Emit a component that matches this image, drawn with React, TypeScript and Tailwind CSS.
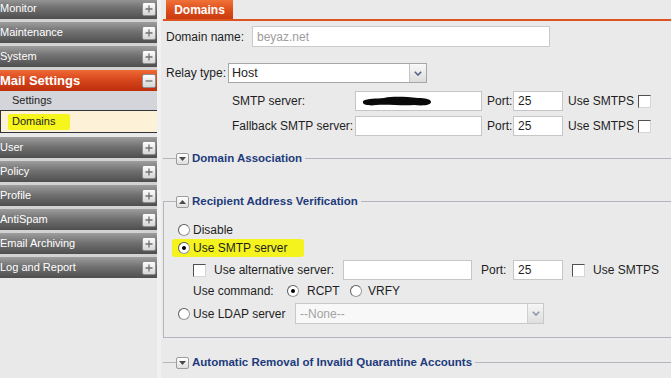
import React from 'react';

const navItems = ['Monitor', 'Maintenance', 'System'];
const lowerItems = ['User', 'Policy', 'Profile', 'AntiSpam', 'Email Archiving', 'Log and Report'];

function PlusBox({ minus }: { minus?: boolean }) {
  return (
    <span className="w-[14px] h-[14px] mr-px shrink-0 rounded-[2px] border border-[#8e8e8e] bg-[linear-gradient(to_bottom,#fdfdfd,#d6d6d6)] flex items-center justify-center text-[#707070]">
      <svg width="8" height="8" viewBox="0 0 8 8">
        <path d={minus ? 'M0.5 4h7' : 'M0.5 4h7M4 0.5v7'} stroke="currentColor" strokeWidth="1.3" />
      </svg>
    </span>
  );
}

function NavBar({ label }: { label: string }) {
  return (
    <div className="h-[21px] flex items-center justify-between bg-[linear-gradient(to_bottom,#9e9e9e,#727272_45%,#4e4e4e)]">
      <span className="text-white text-[11px] leading-none">{label}</span>
      <PlusBox />
    </div>
  );
}

function Radio({ checked }: { checked?: boolean }) {
  return (
    <span className="w-[12px] h-[12px] shrink-0 rounded-full border border-[#9a9a9a] border-t-[#5c5c5c] border-l-[#5c5c5c] bg-white flex items-center justify-center">
      {checked && <span className="w-[4px] h-[4px] rounded-full bg-black" />}
    </span>
  );
}

function Check() {
  return (
    <span className="block w-[13px] h-[13px] shrink-0 bg-white border border-t-[#505050] border-l-[#505050] border-r-[#d6d6d6] border-b-[#d6d6d6]" />
  );
}

function Toggle({ up }: { up?: boolean }) {
  return (
    <span className="w-[13px] h-[12px] shrink-0 rounded-[2px] border border-[#9c9c9c] bg-[linear-gradient(to_bottom,#ffffff,#dedede)] flex items-center justify-center">
      <svg width="7" height="4" viewBox="0 0 7 4">
        <path d={up ? 'M0 4L3.5 0L7 4Z' : 'M0 0L3.5 4L7 0Z'} fill="#4a4a4a" />
      </svg>
    </span>
  );
}

function Legend({ title, up, indent }: { title: string; up?: boolean; indent: string }) {
  return (
    <legend className={`${indent} pr-[3px]`}>
      <span className="flex items-center gap-[3px] h-[13px]">
        <Toggle up={up} />
        <span className="text-[11.5px] leading-none font-bold text-[#1d3b7c]">{title}</span>
      </span>
    </legend>
  );
}

function Chevron({ color }: { color: string }) {
  return (
    <svg width="8" height="5" viewBox="0 0 8 5">
      <path d="M0.8 0.8L4 4L7.2 0.8" fill="none" stroke={color} strokeWidth="1.6" />
    </svg>
  );
}

function TextBox({ width, value, children }: { width: string; value?: string; children?: React.ReactNode }) {
  return (
    <div className={`${width} h-[20px] shrink-0 bg-white border border-[#c6c6c6] flex items-center px-[4px] text-[12px] text-[#1e1e1e]`}>
      {value}
      {children}
    </div>
  );
}

export default function App() {
  return (
    <div className="w-[671px] h-[378px] overflow-hidden flex bg-[#eaeaea] font-['Liberation_Sans',Arial,sans-serif]">
      <aside className="w-[161px] shrink-0 border-r-4 border-[#f1f1f1] bg-[#e9e9e9] flex flex-col">
        <div className="-mt-[2px] flex flex-col gap-[3px] bg-[#d2d2d2]">
          {navItems.map((item) => (
            <NavBar key={item} label={item} />
          ))}
          <div className="h-[21px] flex items-center justify-between bg-[linear-gradient(to_bottom,#ef6a36,#d6441b_50%,#bd2e0b)]">
            <span className="text-white text-[13px] font-bold leading-none">Mail Settings</span>
            <PlusBox minus />
          </div>
        </div>
        <div className="h-[19px] bg-[#d3d5da] flex items-center pl-[12px] text-[11px] text-[#1e1e1e]">Settings</div>
        <div className="h-[23px] bg-[#fdf1d8] border-y border-l border-[#2f333b] flex items-center pl-[7px]">
          <span className="h-[16px] w-[62px] bg-[#f6f51c] rounded-[2px] flex items-center pl-[4px] text-[11px] text-[#1e1e1e]">Domains</span>
        </div>
        <div className="mt-[4px] flex flex-col gap-[3px] bg-[#d2d2d2]">
          {lowerItems.map((item) => (
            <NavBar key={item} label={item} />
          ))}
        </div>
      </aside>

      <main className="flex-1 min-w-0 flex flex-col text-[12px] text-[#1e1e1e]">
        <div className="h-[21px] shrink-0 ml-[2px] border-b-2 border-[#dd5420] flex items-end">
          <div className="ml-[3px] w-[67px] h-[19px] bg-[linear-gradient(to_bottom,#f07238,#dc4c1a_55%,#c93c10)] flex items-center justify-center text-white font-bold text-[12px]">
            Domains
          </div>
        </div>

        <div className="mt-[5px] h-[21px] pl-[5px] flex items-center">
          <span className="w-[86px] shrink-0">Domain name:</span>
          <div className="w-[298px] h-[21px] bg-white border border-[#cacaca] flex items-center px-[4px] text-[#9d9d9d]">beyaz.net</div>
        </div>

        <div className="mt-[16px] h-[20px] pl-[5px] flex items-center">
          <span className="w-[62px] shrink-0">Relay type:</span>
          <div className="w-[199px] h-[20px] bg-white border border-[#a7a7a7] flex items-stretch">
            <span className="flex-1 flex items-center pl-[3px] text-[12.5px]">Host</span>
            <span className="w-[17px] border-l border-[#c4c4c4] bg-[linear-gradient(to_bottom,#fafafa,#dcdcdc)] flex items-center justify-center">
              <Chevron color="#52648a" />
            </span>
          </div>
        </div>

        <div className="mt-[8px] h-[20px] pl-[71px] flex items-center">
          <span className="w-[123px] shrink-0">SMTP server:</span>
          <TextBox width="w-[127px]">
            <svg width="70" height="13" viewBox="0 0 70 13" className="ml-[2px]">
              <path
                d="M1 6 C6 3, 14 4, 22 3 C32 1, 44 2, 56 3 C63 3, 69 4, 69 7 C69 10, 62 11, 52 10 C40 11, 26 9, 14 10 C8 11, 2 10, 1 8 Z"
                fill="#0a0a0a"
              />
            </svg>
          </TextBox>
          <span className="ml-[5px] w-[26px] shrink-0">Port:</span>
          <TextBox width="w-[50px]" value="25" />
          <span className="ml-[5px]">Use SMTPS</span>
          <span className="ml-[4px]">
            <Check />
          </span>
        </div>

        <div className="mt-[5px] h-[20px] pl-[71px] flex items-center">
          <span className="w-[123px] shrink-0">Fallback SMTP server:</span>
          <TextBox width="w-[127px]" />
          <span className="ml-[5px] w-[26px] shrink-0">Port:</span>
          <TextBox width="w-[50px]" value="25" />
          <span className="ml-[5px]">Use SMTPS</span>
          <span className="ml-[4px]">
            <Check />
          </span>
        </div>

        <fieldset className="mt-[16px] ml-[2px] border-t border-[#b5b5bd]">
          <Legend title="Domain Association" indent="ml-[13px]" />
        </fieldset>

        <fieldset className="mt-[30px] ml-[2px] border-t border-l border-b border-[#b5b5bd] pb-[13px]">
          <Legend title="Recipient Address Verification" up indent="ml-[12px]" />

          <div className="mt-[13px] h-[18px] pl-[14px] flex items-center">
            <Radio />
            <span className="ml-[3px]">Disable</span>
          </div>

          <div className="h-[18px] pl-[8px] flex items-center">
            <span className="h-[18px] pl-[6px] pr-[17px] bg-[#f4f31e] rounded-[3px] flex items-center">
              <Radio checked />
              <span className="ml-[3px]">Use SMTP server</span>
            </span>
          </div>

          <div className="mt-[3px] h-[20px] pl-[29px] flex items-center">
            <Check />
            <span className="ml-[8px] w-[129px] shrink-0">Use alternative server:</span>
            <TextBox width="w-[129px]" />
            <span className="ml-[9px] w-[32px] shrink-0">Port:</span>
            <TextBox width="w-[50px]" value="25" />
            <span className="ml-[9px]">
              <Check />
            </span>
            <span className="ml-[8px]">Use SMTPS</span>
          </div>

          <div className="mt-[2px] h-[18px] pl-[29px] flex items-center">
            <span className="w-[94px] shrink-0">Use command:</span>
            <Radio checked />
            <span className="ml-[8px] w-[43px] shrink-0">RCPT</span>
            <Radio />
            <span className="ml-[6px]">VRFY</span>
          </div>

          <div className="mt-[3px] h-[21px] pl-[14px] flex items-center">
            <Radio />
            <span className="ml-[3px] w-[102px] shrink-0">Use LDAP server</span>
            <div className="w-[249px] h-[21px] bg-[#f8f8f8] border border-[#c8c8c8] flex items-stretch">
              <span className="flex-1 flex items-center pl-[4px] text-[#a3a3a3]">--None--</span>
              <span className="w-[16px] border-l border-[#d0d0d0] bg-[linear-gradient(to_bottom,#f6f6f6,#dedede)] flex items-center justify-center">
                <Chevron color="#8c94a8" />
              </span>
            </div>
          </div>
        </fieldset>

        <fieldset className="mt-[18px] ml-[2px] border-t border-[#b5b5bd]">
          <Legend title="Automatic Removal of Invalid Quarantine Accounts" indent="ml-[13px]" />
        </fieldset>
      </main>
    </div>
  );
}
